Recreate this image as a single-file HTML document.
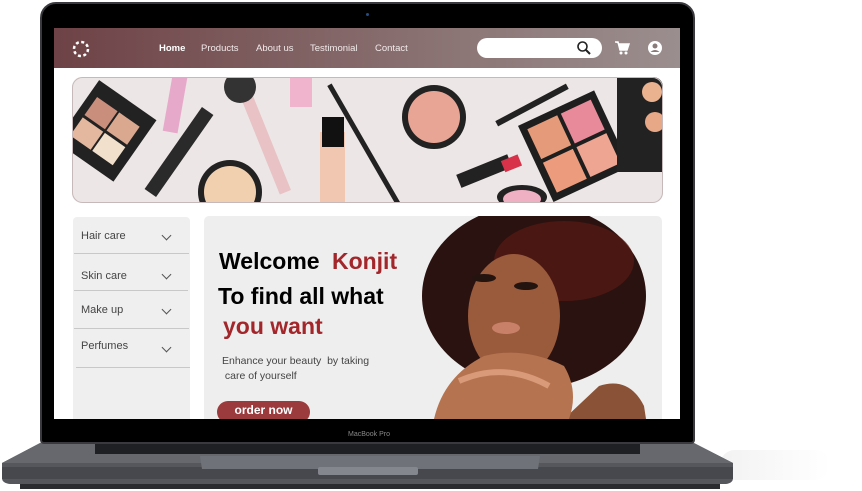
<!DOCTYPE html>
<html><head><meta charset="utf-8"><style>
*{margin:0;padding:0;box-sizing:border-box}
body{width:862px;height:491px;background:#fff;position:relative;overflow:hidden;font-family:"Liberation Sans",sans-serif}
.a{position:absolute}
.nav a{position:absolute;top:43px;color:#f2eaea;font-size:9.5px}
.side div.t{position:absolute;left:81px;font-size:11px;color:#444}
.chev{position:absolute;left:163px;width:7px;height:7px;border-right:1.6px solid #555;border-bottom:1.6px solid #555;transform:rotate(45deg)}
.ln{position:absolute;height:1px;background:#c8c8c8}
</style></head><body>
<!-- shadow -->
<div class="a" style="left:720px;top:450px;width:110px;height:30px;background:linear-gradient(90deg,#f2f2f2,#fff);border-radius:15px"></div>
<!-- base -->
<svg class="a" style="left:0;top:430px" width="760" height="61">
<path d="M42 12 L692 12 L733 33 L733 48 Q733 53 726 54 L10 54 Q2 53 2 48 L2 33 Z" fill="#55575d"/>
<path d="M42 12 L692 12 L733 33 L2 33 Z" fill="#66686e"/>
<rect x="2" y="37" width="731" height="12" fill="#46484e"/>
<rect x="95" y="14" width="545" height="10" fill="#1f2024"/>
<path d="M200 26 L540 26 L538 39 L202 39 Z" fill="#707279"/>
<rect x="318" y="37" width="100" height="8" rx="2" fill="#85878f"/>
<rect x="20" y="54" width="700" height="5" fill="#2b2c30"/>
</svg>
<!-- bezel -->
<div class="a" style="left:40px;top:2px;width:655px;height:442px;background:#000;border-radius:16px 16px 4px 4px;border:2px solid #3a3a3e"></div>
<div class="a" style="left:366px;top:13px;width:3px;height:3px;border-radius:50%;background:#2a4b7a"></div>
<!-- screen -->
<div class="a" style="left:54px;top:28px;width:626px;height:391px;background:#fff;overflow:hidden">
 <div class="a" style="left:0;top:0;width:626px;height:40px;background:linear-gradient(90deg,#6e4246,#8a7272 60%,#9b8e8e)"></div>
</div>
<svg class="a" style="left:71px;top:39px" width="20" height="20"><circle cx="10" cy="10" r="7" fill="none" stroke="#fff" stroke-width="2.5" stroke-dasharray="3 2.5"/></svg>
<div class="nav">
<a style="left:159px;font-weight:bold;color:#fff">Home</a><a style="left:201px">Products</a><a style="left:256px">About us</a><a style="left:310px">Testimonial</a><a style="left:375px">Contact</a>
</div>
<div class="a" style="left:477px;top:38px;width:125px;height:20px;background:#fff;border-radius:10px"></div>
<svg class="a" style="left:576px;top:40px" width="16" height="16"><circle cx="6.5" cy="6.5" r="4.5" fill="none" stroke="#222" stroke-width="1.6"/><path d="M10 10 L14 14" stroke="#222" stroke-width="2"/></svg>
<svg class="a" style="left:614px;top:40px" width="16" height="16"><path d="M1 2 H4 L6 10 H13 L15 4 H5" fill="#fff" stroke="#fff" stroke-width="1.5"/><circle cx="7" cy="13" r="1.5" fill="#fff"/><circle cx="12" cy="13" r="1.5" fill="#fff"/></svg>
<svg class="a" style="left:647px;top:40px" width="16" height="16"><circle cx="8" cy="8" r="7" fill="#fff"/><circle cx="8" cy="6" r="2.5" fill="#8a7a7a"/><path d="M3.5 12 Q8 8 12.5 12" fill="#8a7a7a"/></svg>
<!-- banner -->
<svg class="a" style="left:72px;top:77px" width="591" height="126">
<defs><clipPath id="c"><rect width="591" height="126" rx="10"/></clipPath></defs>
<g clip-path="url(#c)">
<rect width="591" height="126" fill="#ece6e6"/>
<g transform="rotate(35 30 60)"><rect x="-5" y="15" width="70" height="75" fill="#222"/><rect x="3" y="30" width="25" height="22" fill="#c98e7c"/><rect x="30" y="30" width="25" height="22" fill="#d9a88f"/><rect x="3" y="55" width="25" height="22" fill="#e4b89f"/><rect x="30" y="55" width="25" height="22" fill="#f0e0cc"/></g>
<rect x="95" y="-5" width="15" height="60" fill="#e7a9c9" transform="rotate(10 100 30)"/>
<rect x="100" y="25" width="14" height="100" fill="#2a2a2a" transform="rotate(35 107 75)"/>
<rect x="185" y="10" width="12" height="110" fill="#e8c2c4" transform="rotate(-22 190 60)"/>
<circle cx="168" cy="10" r="16" fill="#333"/>
<rect x="218" y="0" width="22" height="30" fill="#f0b5cc"/>
<rect x="248" y="55" width="25" height="80" fill="#f2c7b2"/><rect x="250" y="40" width="22" height="30" fill="#111"/>
<circle cx="158" cy="115" r="32" fill="#222"/><circle cx="158" cy="115" r="26" fill="#f1d0b0"/>
<rect x="285" y="0" width="5" height="140" fill="#222" transform="rotate(-30 287 60)"/>
<circle cx="362" cy="40" r="32" fill="#222"/><circle cx="362" cy="40" r="26" fill="#e8a595"/>
<rect x="420" y="25" width="80" height="6" fill="#222" transform="rotate(-28 460 28)"/>
<rect x="385" y="88" width="55" height="14" fill="#222" transform="rotate(-22 410 95)"/><rect x="430" y="80" width="18" height="12" fill="#d8324a" transform="rotate(-22 440 85)"/>
<g transform="rotate(-25 500 70)"><rect x="460" y="28" width="84" height="84" fill="#1e1e1e"/><rect x="467" y="35" width="33" height="33" fill="#e59b7a"/><rect x="504" y="35" width="33" height="33" fill="#e88a9a"/><rect x="467" y="72" width="33" height="33" fill="#ec9c7d"/><rect x="504" y="72" width="33" height="33" fill="#eea592"/></g>
<rect x="545" y="0" width="46" height="95" fill="#222"/><circle cx="580" cy="15" r="10" fill="#eab28f"/><circle cx="583" cy="45" r="10" fill="#e6a887"/>
<ellipse cx="450" cy="120" rx="25" ry="12" fill="#222"/><ellipse cx="450" cy="122" rx="19" ry="9" fill="#f0b0c4"/>
</g>
<rect x="0.5" y="0.5" width="590" height="125" rx="10" fill="none" stroke="#c7b9b9"/>
</svg>
<!-- sidebar -->
<div class="a" style="left:73px;top:217px;width:117px;height:205px;background:#f0efef;border-radius:4px 4px 0 0"></div>
<div class="side">
<div class="t" style="top:230px">Hair care</div><div class="chev" style="top:232px"></div><div class="ln" style="left:74px;top:253px;width:115px"></div>
<div class="t" style="top:270px">Skin care</div><div class="chev" style="top:271px"></div><div class="ln" style="left:74px;top:290px;width:114px"></div>
<div class="t" style="top:304px">Make up</div><div class="chev" style="top:306px"></div><div class="ln" style="left:74px;top:328px;width:115px"></div>
<div class="t" style="top:340px">Perfumes</div><div class="chev" style="top:344px"></div><div class="ln" style="left:76px;top:367px;width:114px"></div>
</div>
<!-- hero -->
<div class="a" style="left:204px;top:216px;width:458px;height:203px;background:#eeeeee;border-radius:5px 5px 0 0;overflow:hidden">
<svg class="a" style="left:210px;top:0" width="250" height="203">
<ellipse cx="120" cy="80" rx="112" ry="92" fill="#2a1210"/>
<ellipse cx="150" cy="45" rx="70" ry="40" fill="#5a1a14" opacity=".7"/>
<path d="M185 170 Q215 160 230 190 L232 203 L150 203 Z" fill="#8a5236"/>
<ellipse cx="100" cy="100" rx="46" ry="62" fill="#9a5a3c"/>
<path d="M20 203 Q30 160 70 140 Q110 130 150 150 Q165 175 155 203 Z" fill="#b5734f"/>
<path d="M45 165 Q90 145 135 170" stroke="#d89a78" stroke-width="6" fill="none"/>
<ellipse cx="70" cy="62" rx="12" ry="4" fill="#231410"/><ellipse cx="112" cy="70" rx="12" ry="4" fill="#231410"/>
<ellipse cx="92" cy="112" rx="14" ry="6" fill="#c98068"/>
</svg>
</div>
<div class="a" style="left:219px;top:248px;font-size:23px;font-weight:bold;color:#000">Welcome <span style="color:#a3262b;margin-left:6px">Konjit</span></div>
<div class="a" style="left:218px;top:283px;font-size:23px;font-weight:bold;color:#000">To find all what</div>
<div class="a" style="left:223px;top:313px;font-size:23px;font-weight:bold;color:#a3262b">you want</div>
<div class="a" style="left:222px;top:354px;font-size:10.5px;color:#444;line-height:15px">Enhance your beauty&nbsp; by taking<br>&nbsp;care of yourself</div>
<div class="a" style="left:217px;top:401px;width:93px;height:22px;background:#9b3b3d;border-radius:11px;color:#fff;font-weight:bold;font-size:12px;text-align:center;line-height:19px">order now</div>
<!-- bezel bottom strip over screen -->
<div class="a" style="left:54px;top:419px;width:626px;height:23px;background:#000"></div>
<div class="a" style="left:299px;top:431px;width:140px;text-align:center;font-size:7px;color:#888">MacBook Pro</div>
</body></html>
